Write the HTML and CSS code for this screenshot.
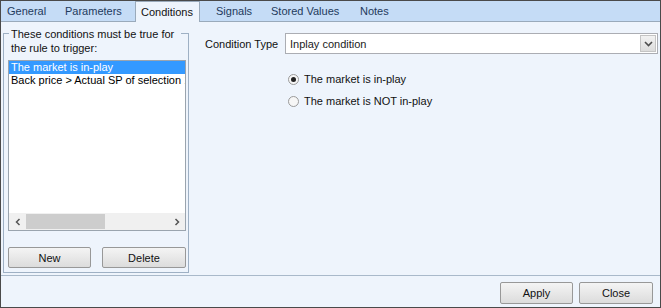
FILE: index.html
```html
<!DOCTYPE html>
<html lang="en">
<head>
    <meta charset="UTF-8">
    <title>Rule - Conditions</title>
    <link rel="stylesheet" href="styles.css">
</head>
<body>
    <div class="window">
        <div class="tabs">
            <div class="tab tab-general">General</div>
            <div class="tab tab-params">Parameters</div>
            <div class="tab tab-conditions active">Conditions</div>
            <div class="tab tab-signals">Signals</div>
            <div class="tab tab-stored">Stored Values</div>
            <div class="tab tab-notes">Notes</div>
        </div>

        <div class="page">
            <div class="left-pane">
                <div class="group">
                    <div class="caption">These conditions must be true for the rule to trigger:</div>
                    <div class="listbox">
                        <div class="items">
                            <div class="item selected">The market is in-play</div>
                            <div class="item">Back price &gt; Actual SP of selection 1</div>
                        </div>
                        <div class="hscroll">
                            <span class="arrow">
                                <svg width="6" height="8" viewBox="0 0 6 8"><path d="M4.5 1 L1.5 4 L4.5 7" fill="none" stroke="#555" stroke-width="1.5"/></svg>
                            </span>
                            <div class="track"><div class="thumb"></div></div>
                            <span class="arrow">
                                <svg width="6" height="8" viewBox="0 0 6 8"><path d="M1.5 1 L4.5 4 L1.5 7" fill="none" stroke="#555" stroke-width="1.5"/></svg>
                            </span>
                        </div>
                    </div>
                    <div class="group-buttons">
                        <button class="btn btn-new">New</button>
                        <button class="btn btn-delete">Delete</button>
                    </div>
                </div>
            </div>

            <div class="right-pane">
                <div class="field-row">
                    <label class="field-label">Condition Type</label>
                    <div class="combo">
                        <span class="combo-text">Inplay condition</span>
                        <span class="combo-btn">
                            <svg width="9" height="6" viewBox="0 0 9 6"><path d="M1 1 L4.5 4.5 L8 1" fill="none" stroke="#4d4d4d" stroke-width="1.6"/></svg>
                        </span>
                    </div>
                </div>
                <div class="radios">
                    <div class="radio-row"><span class="radio checked"></span>The market is in-play</div>
                    <div class="radio-row"><span class="radio"></span>The market is NOT in-play</div>
                </div>
            </div>
        </div>

        <div class="footer">
            <button class="btn btn-apply">Apply</button>
            <button class="btn btn-close">Close</button>
        </div>
    </div>
</body>
</html>
```

FILE: styles.css
```css
body {
    margin: 0;
    font-family: "Liberation Sans", Arial, sans-serif;
    font-size: 11px;
    color: #1b1b1b;
}

.window {
    width: 661px;
    height: 308px;
    box-sizing: border-box;
    border: 1px solid #4a4a4a;
    background: #eef4fc;
    display: flex;
    flex-direction: column;
}

/* tab strip */
.tabs {
    height: 20px;
    background: #c5dcf6;
    border-bottom: 1px solid #9aaabb;
    display: flex;
    align-items: flex-end;
}

.tab {
    height: 20px;
    line-height: 21px;
    box-sizing: border-box;
    color: #1e3a5c;
    white-space: nowrap;
}

.tab-general { width: 56px; padding-left: 6px; }
.tab-params { width: 78px; padding-left: 8px; }
.tab-signals { width: 64px; padding-left: 16px; }
.tab-stored { width: 83px; padding-left: 7px; }
.tab-notes { width: 60px; padding-left: 13px; }

.tab.active {
    width: 65px;
    height: 21px;
    margin-bottom: -1px;
    padding-left: 5px;
    background: #eef4fc;
    border: 1px solid #9aaabb;
    border-bottom: none;
    color: #111;
}

/* main page */
.page {
    display: flex;
    height: 253px;
    border-bottom: 1px solid #a9b9ca;
}

.left-pane {
    width: 190px;
    padding: 11px 0 0 2px;
}

.group {
    width: 186px;
    height: 240px;
    box-sizing: border-box;
    border: 1px solid #9eb0c4;
    padding: 0 2px 0 4px;
}

.caption {
    margin-top: -7px;
    margin-left: 1px;
    width: 170px;
    background: #eef4fc;
    padding-left: 2px;
    line-height: 14px;
    color: #111;
}

.listbox {
    margin-top: 5px;
    width: 178px;
    height: 171px;
    box-sizing: border-box;
    border: 1px solid #9aa4ae;
    background: #fff;
    display: flex;
    flex-direction: column;
    overflow: hidden;
}

.items {
    flex: 1;
    white-space: nowrap;
    overflow: hidden;
}

.item {
    height: 13px;
    line-height: 13px;
    padding-left: 2px;
    color: #000;
}

.item.selected {
    background: #3399ff;
    color: #fff;
}

.hscroll {
    height: 17px;
    background: #f0f0f0;
    display: flex;
    align-items: center;
}

.hscroll .arrow {
    width: 17px;
    height: 17px;
    display: flex;
    align-items: center;
    justify-content: center;
}

.track {
    flex: 1;
    height: 15px;
}

.thumb {
    width: 79px;
    height: 15px;
    background: #cdcdcd;
}

.group-buttons {
    display: flex;
    gap: 11px;
    margin-top: 16px;
}

.btn {
    font-family: "Liberation Sans", Arial, sans-serif;
    font-size: 11px;
    color: #111;
    height: 21px;
    border: 1px solid #989898;
    border-radius: 2px;
    background: linear-gradient(#f4f4f4, #e8e8e8 50%, #dcdcdc);
    padding: 0;
}

.btn-new { width: 83px; }
.btn-delete { width: 84px; }

/* right side */
.right-pane {
    flex: 1;
    padding: 11px 0 0 12px;
}

.field-row {
    display: flex;
    align-items: center;
}

.field-label {
    width: 80px;
    color: #111;
}

.combo {
    width: 373px;
    height: 21px;
    box-sizing: border-box;
    border: 1px solid #abadb3;
    background: #fff;
    display: flex;
    align-items: center;
    justify-content: space-between;
    padding-left: 4px;
}

.combo-btn {
    width: 16px;
    height: 17px;
    margin-right: 1px;
    box-sizing: border-box;
    border: 1px solid #c4c4c4;
    background: linear-gradient(#f2f2f2, #dcdcdc);
    display: flex;
    align-items: center;
    justify-content: center;
}

.radios {
    margin: 14px 0 0 83px;
}

.radio-row {
    display: flex;
    align-items: center;
    height: 22px;
    color: #111;
}

.radio {
    width: 11px;
    height: 11px;
    box-sizing: border-box;
    border: 1px solid #9a9a9a;
    border-radius: 50%;
    background: #f6f6f6;
    margin-right: 5px;
    position: relative;
}

.radio.checked::after {
    content: "";
    position: absolute;
    left: 2px;
    top: 2px;
    width: 5px;
    height: 5px;
    border-radius: 50%;
    background: #222;
}

/* bottom buttons */
.footer {
    flex: 1;
    display: flex;
    justify-content: flex-end;
    align-items: flex-start;
    gap: 6px;
    padding: 6px 7px 0 0;
}

.btn-apply { width: 73px; height: 22px; }
.btn-close { width: 74px; height: 22px; }
```
